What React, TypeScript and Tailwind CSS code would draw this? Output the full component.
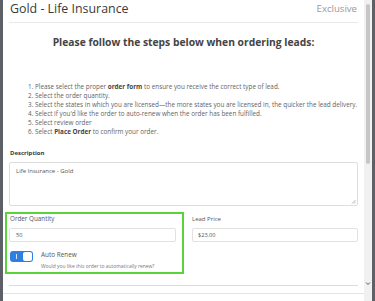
import React from 'react';

const steps: React.ReactNode[] = [
  <>Please select the proper <b className="font-bold text-[#444]">order form</b> to ensure you receive the correct type of lead.</>,
  <>Select the order quantity.</>,
  <>Select the states in which you are licensed—the more states you are licensed in, the quicker the lead delivery.</>,
  <>Select if you'd like the order to auto-renew when the order has been fulfilled.</>,
  <>Select review order</>,
  <>Select <b className="font-bold text-[#444]">Place Order</b> to confirm your order.</>,
];

export default function App() {
  return (
    <div className="w-[375px] h-[301px] flex bg-[#5e6068] overflow-hidden" style={{ fontFamily: '"Open Sans", "Liberation Sans", sans-serif' }}>
      <div className="w-[3px] shrink-0" />
      {/* Modal body */}
      <div className="flex-1 bg-white overflow-hidden px-[6px]">
        <div className="flex items-start justify-between px-[1px] pt-[1px] h-[23px] border-b border-[#e9e9e9]">
          <span className="text-[12.4px] leading-[16px] text-[#3a3a3a]">Gold - Life Insurance</span>
          <span className="text-[9.6px] leading-[16px] text-[#9a9a9a]">Exclusive</span>
        </div>

        <h2 className="text-center text-[10.3px] font-bold text-[#444] mt-[12px] leading-[14px]">
          Please follow the steps below when ordering leads:
        </h2>

        <ol className="mt-[33px] ml-[19px] text-[6.35px] leading-[9px] text-[#636363]">
          {steps.map((s, i) => (
            <li key={i} className="whitespace-nowrap">{i + 1}. {s}</li>
          ))}
        </ol>

        <div className="mt-[13px]">
          <div className="px-[1px] text-[6px] font-bold text-[#3a3a3a] leading-[8px]">Description</div>
          <div className="mt-[5px] h-[44px] border border-[#dedede] rounded-[2px] px-[6px] pt-[4px] text-[6px] leading-[8px] text-[#555] relative">
            Life Insurance - Gold
            <svg className="absolute right-[1px] bottom-[1px]" width="5" height="5" viewBox="0 0 5 5">
              <path d="M4.5 1 L1 4.5 M4.5 3 L3 4.5" stroke="#999" strokeWidth="0.7" />
            </svg>
          </div>
        </div>

        <div className="flex mt-[6px]">
          <div className="w-[179px] h-[62px] border-2 border-[#58d33c] -ml-[4px] pl-[2px] pr-[6px] pt-[1px] shrink-0">
            <div className="px-[1px] text-[6.3px] text-[#555] leading-[8px]">Order Quantity</div>
            <div className="mt-[5px] h-[14px] border border-[#e2e2e2] rounded-[2px] px-[6px] text-[5.6px] leading-[12px] text-[#555]">50</div>
            <div className="flex mt-[9px] pl-[1px]">
              <div className="w-[23px] h-[11px] rounded-[3px] bg-[#2f7fe2] relative shrink-0">
                <span className="absolute left-[6px] top-[3px] w-[1px] h-[5px] bg-white/80" />
                <span className="absolute right-[1.5px] top-[1px] w-[9px] h-[9px] rounded-[2px] bg-white" />
              </div>
              <div className="ml-[8px]">
                <div className="text-[6.4px] text-[#555] leading-[8px]">Auto Renew</div>
                <div className="text-[4.95px] text-[#777] leading-[6px] mt-[4px] whitespace-nowrap">Would you like this order to automatically renew?</div>
              </div>
            </div>
          </div>
          <div className="flex-1 pl-[8px] pt-[3px]">
            <div className="text-[6px] text-[#555] leading-[8px]">Lead Price</div>
            <div className="mt-[5px] h-[14px] border border-[#e2e2e2] rounded-[2px] px-[5px] text-[5.6px] leading-[12px] text-[#555]">$23.00</div>
          </div>
        </div>

        <div className="mt-[11px] border-t border-[#dcdcdc]" />
        <div className="-mx-[6px] mt-[7px] border-t border-[#e4e4e4]" />
      </div>
      {/* Scrollbar */}
      <div className="w-[8px] shrink-0 bg-[#f1f1f1] relative">
        <div className="absolute left-[2px] top-[4px] w-[4px] h-[160px] rounded-[2px] bg-[#c6c6c6]" />
        <svg className="absolute left-[1px] top-[281px]" width="6" height="5" viewBox="0 0 6 5">
          <path d="M1 1.5 L3 3.5 L5 1.5" stroke="#555" strokeWidth="1" fill="none" />
        </svg>
      </div>
      <div className="w-[3px] shrink-0" />
    </div>
  );
}
